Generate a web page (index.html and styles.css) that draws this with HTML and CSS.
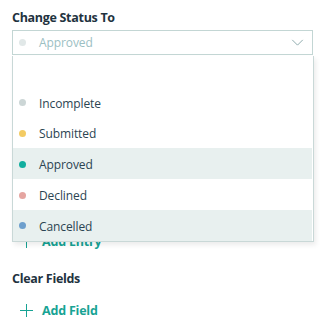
FILE: index.html
```html
<!DOCTYPE html>
<html>
<head>
<meta charset="utf-8">
<link rel="stylesheet" href="styles.css">
</head>
<body>
<div class="panel">
  <div class="label">Change Status To</div>
  <div class="field">
    <div class="select">
      <span class="dot dot-faded"></span>
      <span class="select-text">Approved</span>
      <svg class="chev" width="14" height="8" viewBox="0 0 14 8"><path d="M1 1 L7 7 L13 1" fill="none" stroke="#80a0a3" stroke-width="1"/></svg>
    </div>
    <ul class="menu">
      <li class="item"></li>
      <li class="item"><span class="dot" style="background:#ccd6d6"></span>Incomplete</li>
      <li class="item"><span class="dot" style="background:#f3cb63"></span>Submitted</li>
      <li class="item sel"><span class="dot" style="background:#12ae9f"></span>Approved</li>
      <li class="item"><span class="dot" style="background:#e5a5a1"></span>Declined</li>
      <li class="item sel"><span class="dot" style="background:#6d9fcd"></span>Cancelled</li>
    </ul>
  </div>
  <div class="entries"></div>
  <div class="add"><span class="plus"></span>Add Entry</div>
  <div class="label label2">Clear Fields</div>
  <div class="add add-field"><span class="plus"></span>Add Field</div>
</div>
</body>
</html>
```
FILE: styles.css
```css
html, body { margin: 0; padding: 0; background: #fff; }
body { font-family: "Open Sans", "Noto Sans", sans-serif; color: #2b4452; min-height: 330px; }
.panel { padding: 8px 16px 10px 12px; }
.label { font-weight: 700; font-size: 12.5px; line-height: 20px; color: #1f3340; letter-spacing: -0.3px; }
.field { position: relative; margin-top: 2px; }
.select { height: 23px; border: 1px solid #c3d6d4; display: flex; align-items: center; padding: 0 4px 0 0; }
.dot { width: 7px; height: 7px; border-radius: 50%; flex: none; margin: 0 13px 0 6px; }
.dot-faded { background: #e1e8e8; }
.select-text { flex: 1; font-size: 12px; color: #9cc0c3; letter-spacing: -0.1px; }
.chev { margin-right: 4px; width: 13px; height: 7px; }
.menu { position: absolute; left: 0; right: -1px; top: 26px; margin: 0; padding: 0; list-style: none; background: #fff; border: 1px solid #c9d8d7; border-top: none; box-shadow: 2px 3px 5px rgba(0,0,0,0.08); z-index: 2; }
.item { height: 30.8px; box-sizing: border-box; padding-top: 2px; display: flex; align-items: center; font-size: 12px; letter-spacing: -0.1px; margin-right: 1px; }
.item .dot { margin-top: -1px; }
.item.sel { background: #e8f0ef; }
.entries { height: 176px; }
.add { display: flex; align-items: center; height: 20px; font-size: 12.5px; font-weight: 700; color: #17a394; letter-spacing: -0.2px; }
.plus { width: 13px; height: 13px; position: relative; margin: 0 9px 0 8px; }
.plus::before, .plus::after { content: ""; position: absolute; background: #17a394; }
.plus::before { left: 6px; top: 0; width: 1px; height: 13px; }
.plus::after { top: 6px; left: 0; width: 13px; height: 1px; }
.label2 { margin-top: 18px; }
.add-field { margin-top: 11px; }
```
